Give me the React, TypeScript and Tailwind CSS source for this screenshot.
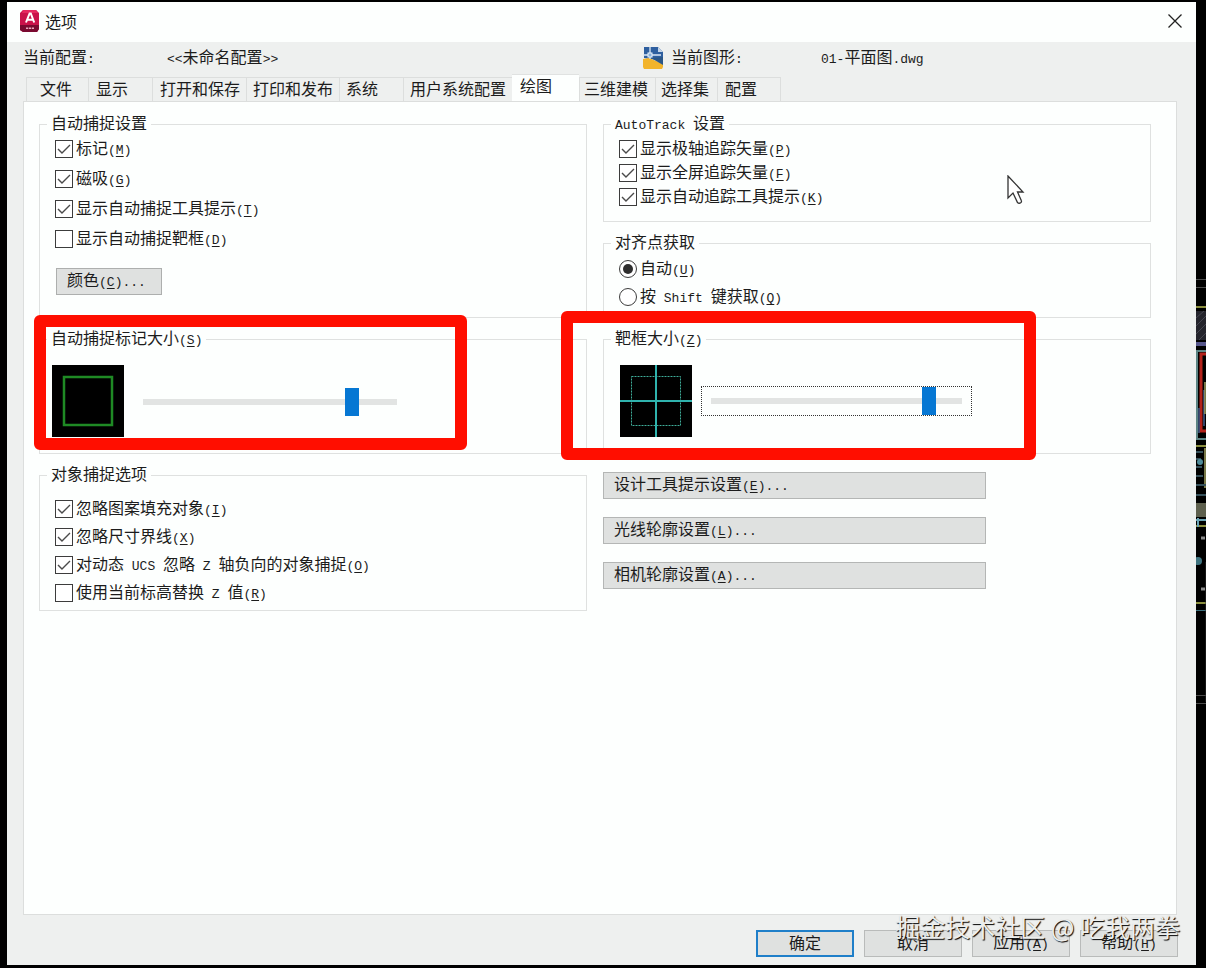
import { useState, type ReactNode } from "react"

const FONT = "font-['Noto_Sans_CJK_SC',sans-serif]"

// Latin runs are set in a half-width mono face, "_X" marks the access key
function Label({ text }: { text: string }) {
  const runs = text.match(/_[A-Z]|[\x20-\x5e\x60-\x7e]+|[^\x00-\x7f]+/g) ?? []
  return (
    <span className="whitespace-pre">
      {runs.map((run, i) => {
        if (run.startsWith("_")) {
          return (
            <span key={i} className="font-['Liberation_Mono',monospace] text-[13px] underline underline-offset-2">
              {run.slice(1)}
            </span>
          )
        }
        if (run.charCodeAt(0) < 128) {
          return (
            <span key={i} className="font-['Liberation_Mono',monospace] text-[13px]">
              {run}
            </span>
          )
        }
        return <span key={i}>{run}</span>
      })}
    </span>
  )
}

function Group({ title, className, children }: { title: string; className: string; children: ReactNode }) {
  return (
    <fieldset className="min-w-0 border border-[#dfe1e0]">
      <legend className="ml-[7px] h-5 px-1 leading-4">
        <Label text={title} />
      </legend>
      <div className={className}>{children}</div>
    </fieldset>
  )
}

function Check({ text, on = false }: { text: string; on?: boolean }) {
  const [checked, setChecked] = useState(on)
  return (
    <label className="flex h-5 w-fit items-center gap-[3px] leading-5">
      <span className="grid size-[18px] shrink-0">
        <input
          type="checkbox"
          checked={checked}
          onChange={(e) => setChecked(e.target.checked)}
          className="col-start-1 row-start-1 size-[18px] appearance-none border border-[#3c3c3c] bg-white"
        />
        {checked && (
          <svg viewBox="0 0 18 18" className="pointer-events-none col-start-1 row-start-1 size-[18px]">
            <path d="M3 9l4 4 8-8" fill="none" stroke="#4a4a4a" strokeWidth="1.4" />
          </svg>
        )}
      </span>
      <Label text={text} />
    </label>
  )
}

function Radio({ text, on = false }: { text: string; on?: boolean }) {
  return (
    <label className="flex h-5 w-fit items-center gap-[3px] leading-5">
      <span className="grid size-[18px] shrink-0 place-items-center">
        <input
          type="radio"
          name="acquire"
          defaultChecked={on}
          className="peer col-start-1 row-start-1 size-[18px] appearance-none rounded-full border border-[#3c3c3c] bg-white"
        />
        <span className="pointer-events-none col-start-1 row-start-1 hidden size-[10px] rounded-full bg-[#2e2e2e] peer-checked:block" />
      </span>
      <Label text={text} />
    </label>
  )
}

function Slider({ label, value }: { label: string; value: number }) {
  return (
    <input
      type="range"
      aria-label={label}
      defaultValue={value}
      className="block h-7 w-full appearance-none bg-transparent outline-none [&::-webkit-slider-runnable-track]:h-[6px] [&::-webkit-slider-runnable-track]:bg-[#e2e4e3] [&::-webkit-slider-thumb]:mt-[-11px] [&::-webkit-slider-thumb]:h-7 [&::-webkit-slider-thumb]:w-[14px] [&::-webkit-slider-thumb]:appearance-none [&::-webkit-slider-thumb]:bg-[#0677d3]"
    />
  )
}

function Button({ text, className }: { text: string; className: string }) {
  return (
    <button className={`h-[27px] bg-[#dfe1e0] pb-1 leading-5 ${className}`}>
      <Label text={text} />
    </button>
  )
}

const tabs = [
  { name: "文件", size: "w-[62px] pl-[13px]" },
  { name: "显示", size: "w-16 pl-[7px]" },
  { name: "打开和保存", size: "w-[94px] pl-[7px]" },
  { name: "打印和发布", size: "w-[93px] pl-[6px]" },
  { name: "系统", size: "w-16 pl-[6px]" },
  { name: "用户系统配置", size: "w-[109px] pl-[6px]" },
  { name: "绘图", size: "w-[67px] pl-2" },
  { name: "三维建模", size: "w-[76px] pl-1" },
  { name: "选择集", size: "w-[62px] pl-[5px]" },
  { name: "配置", size: "w-[64px] pl-[7px]" },
]

function Tabs() {
  return (
    <div role="tablist" className="ml-[19px] flex items-end">
      {tabs.map((tab, i) => {
        const active = tab.name === "绘图"
        return (
          <button
            key={tab.name}
            role="tab"
            aria-selected={active}
            className={`shrink-0 text-left leading-5 ${tab.size} ${
              active
                ? "-mb-px h-7 border-t border-[#e0e2e1] bg-[#fdfffe] pb-2"
                : "h-6 border-t border-l border-[#dcdedd] pb-[3px]"
            } ${i === tabs.length - 1 ? "border-r" : ""}`}
          >
            {tab.name}
          </button>
        )
      })}
    </div>
  )
}

function AppIcon() {
  return (
    <svg viewBox="0 0 19 22" className="h-[22px] w-[19px]">
      <path d="M3 0h13l3 3v16l-2 3H3l-3-2V3z" fill="#c9124a" />
      <path d="M3 0h13l2 3H2z" fill="#e5275f" />
      <path d="M0 15h19v4l-2 3H3l-3-2z" fill="#790a30" />
      <path d="M6 12.5l3.6-9h1.2l3.4 9M7.5 9.7h5.3" fill="none" stroke="#fff" strokeWidth="2" />
      <path d="M6 18.2h8" stroke="#e9a9bd" strokeWidth="1.6" strokeDasharray="2.2 .7" />
    </svg>
  )
}

function DrawingIcon() {
  return (
    <svg viewBox="0 0 20 22" className="h-[22px] w-5">
      <path d="M1 0h14l5 5v9L1 11z" fill="#2e5f9f" />
      <path d="M15 0l5 5h-5z" fill="#c4d5e8" />
      <path d="M0 12l6-1 14 6v3l-1 2H1l-1-2z" fill="#f2b42c" />
      <path d="M8 11l12-1v8z" fill="#2a5687" />
      <path d="M0 8h18M7 0v12" stroke="#dbe8f5" strokeWidth="1.3" />
      <rect x="5" y="6" width="4" height="4" fill="#86aed9" stroke="#e8f1fa" />
    </svg>
  )
}

// Sliver of the drawing that stays visible beside the dialog
function CanvasEdge() {
  return (
    <svg viewBox="0 2 10 963" preserveAspectRatio="xMinYMin slice" className="w-[10px] shrink-0 self-stretch">
      <path d="M0 279.500h10M0 287.500h10M0 695.500h10M0 703.500h10" stroke="#4b4b4b" />
      <path d="M0 307h10M0 446h10M0 526h10M0 603h10" stroke="#8b8f3f" strokeWidth="2" />
      <rect y="311" width="10" height="29" fill="#24242c" />
      <path d="M0 318l8-7M0 326l10-10M0 334l10-10M3 340l7-7" stroke="#55555f" strokeWidth=".7" />
      <path d="M0 344h10" stroke="#56568a" strokeWidth="4" />
      <path d="M0 351h10M1 351v88M0 439h10" stroke="#5c8484" strokeWidth="2" fill="none" />
      <path d="M10 354H5v77h5" stroke="#b3221b" strokeWidth="3" fill="none" />
      <path d="M3 408v25M8 390v36" stroke="#405a8a" strokeWidth="1.5" />
      <path d="M9 382v32M9 448v40" stroke="#a0a060" strokeWidth="1.5" />
      <path d="M0 452h7M0 459h5M0 467h6M0 476h7M0 485h10M0 495h10" stroke="#35505a" strokeWidth="2" />
      <circle cx="4" cy="462" r="3" fill="#4f8a98" />
      <rect y="503" width="10" height="14" fill="#5e604e" />
      <path d="M0 520h10M2 518v9" stroke="#6aa3b4" strokeWidth="2" />
      <path d="M5 538h4M5 589h4" stroke="#8a8a8a" strokeWidth="3" />
      <circle cx="2" cy="561" r="4" fill="#3f7480" />
      <path d="M0 610.500h10" stroke="#3b6f7c" />
      <path d="M10 562v140" stroke="#2e2e2e" />
    </svg>
  )
}

export default function App() {
  return (
    <div className={`flex min-h-screen bg-black pt-[2px] pb-[3px] pl-[7px] text-[16px] leading-5 text-[#1c1c1c] ${FONT}`}>
      <main className="relative flex min-w-0 flex-1 flex-col bg-[#eef0ef]">
        <header className="flex h-10 items-center bg-[#fdfffe] pr-[14px] pb-[3px] pl-[13px]">
          <AppIcon />
          <h1 className="ml-[6px] flex-1">选项</h1>
          <button aria-label="关闭">
            <svg viewBox="0 0 14 14" className="size-[14px]">
              <path d="M.5.5l13 13M13.500.5l-13 13" stroke="#222" strokeWidth="1.3" />
            </svg>
          </button>
        </header>

        <div className="flex h-8 items-center pl-4">
          <span className="w-36">
            <Label text="当前配置:" />
          </span>
          <span className="w-[476px]">
            <Label text="<<未命名配置>>" />
          </span>
          <DrawingIcon />
          <span className="ml-2 w-[150px]">
            <Label text="当前图形:" />
          </span>
          <Label text="01-平面图.dwg" />
        </div>

        <Tabs />

        <section className="mr-[19px] ml-4 grid flex-1 grid-cols-2 content-start gap-4 border border-[#dcdedd] bg-[#fdfffe] pt-3 pr-[25px] pl-[15px]">
          <div className="flex flex-col gap-[11px]">
            <Group title="自动捕捉设置" className="pb-[22px]">
              <div className="flex flex-col gap-[10px] pt-[5px] pl-[15px]">
                <Check text="标记(_M)" on />
                <Check text="磁吸(_G)" on />
                <Check text="显示自动捕捉工具提示(_T)" on />
                <Check text="显示自动捕捉靶框(_D)" />
              </div>
              <Button text="颜色(_C)..." className="mt-[19px] ml-4 w-[106px] border border-[#adafae] pl-[10px] text-left" />
            </Group>

            <div className="relative">
              <Group title="自动捕捉标记大小(_S)" className="py-4 pr-4 pl-3">
                <div className="flex items-center gap-[19px]">
                  <svg viewBox="0 0 72 72" className="size-[72px] shrink-0">
                    <rect width="72" height="72" fill="#000" />
                    <rect x="12" y="12" width="48" height="48" fill="none" stroke="#1f8a24" strokeWidth="2.500" />
                  </svg>
                  <div className="w-[254px] pt-[2px]">
                    <Slider label="自动捕捉标记大小" value={84} />
                  </div>
                </div>
              </Group>
              <div className="pointer-events-none absolute -top-[14px] -left-[5px] z-10 h-[135px] w-[433px] rounded-md border-12 border-[#ff0e00]" />
            </div>

            <Group title="对象捕捉选项" className="pb-[7px]">
              <div className="flex flex-col gap-2 pt-[14px] pl-[15px]">
                <Check text="忽略图案填充对象(_I)" on />
                <Check text="忽略尺寸界线(_X)" on />
                <Check text="对动态 UCS 忽略 Z 轴负向的对象捕捉(_O)" on />
                <Check text="使用当前标高替换 Z 值(_R)" />
              </div>
            </Group>
          </div>

          <div className="flex flex-col gap-[11px]">
            <div className="relative">
              <Group title="AutoTrack 设置" className="pb-[14px]">
                <div className="flex flex-col gap-1 pt-[5px] pl-[15px]">
                  <Check text="显示极轴追踪矢量(_P)" on />
                  <Check text="显示全屏追踪矢量(_F)" on />
                  <Check text="显示自动追踪工具提示(_K)" on />
                </div>
              </Group>
              <svg viewBox="0 0 18 30" className="pointer-events-none absolute top-[61px] left-[404px] h-[30px] w-[18px]">
                <path
                  d="M1 1v22l5-5 4.500 9.500q1.500 1.500 3.500 0 .8-1 .3-2L10.500 17H16z"
                  fill="#fff"
                  stroke="#333"
                  strokeWidth="1.3"
                />
              </svg>
            </div>

            <Group title="对齐点获取" className="pb-[10px]">
              <div className="flex flex-col gap-2 pt-[6px] pl-[15px]">
                <Radio text="自动(_U)" on />
                <Radio text="按 Shift 键获取(_Q)" />
              </div>
            </Group>

            <div className="relative">
              <Group title="靶框大小(_Z)" className="py-4 pr-4 pl-4">
                <div className="flex items-center gap-[9px]">
                  <svg viewBox="0 0 72 72" className="size-[72px] shrink-0">
                    <rect width="72" height="72" fill="#000" />
                    <rect x="11.500" y="11.500" width="49" height="49" fill="none" stroke="#3fae9a" strokeDasharray="2 1" />
                    <path d="M0 36h72M36 0v72" stroke="#2fb3ae" strokeWidth="2" />
                  </svg>
                  <div className="w-[271px] border border-dotted border-[#333] px-[9px]">
                    <Slider label="靶框大小" value={89} />
                  </div>
                </div>
              </Group>
              <div className="pointer-events-none absolute -top-[18px] -left-[42px] z-10 h-[149px] w-[475px] rounded-md border-12 border-[#ff0e00]" />
            </div>

            <div className="flex flex-col gap-[18px] pt-[7px]">
              <Button text="设计工具提示设置(_E)..." className="w-[383px] border border-[#b4b6b5] pl-[10px] text-left" />
              <Button text="光线轮廓设置(_L)..." className="w-[383px] border border-[#b4b6b5] pl-[10px] text-left" />
              <Button text="相机轮廓设置(_A)..." className="w-[383px] border border-[#b4b6b5] pl-[10px] text-left" />
            </div>
          </div>
        </section>

        <footer className="flex justify-end gap-[10px] pt-[15px] pr-[18px] pb-2">
          <Button text="确定" className="w-[98px] border-2 border-[#1f7fc9]" />
          <Button text="取消" className="w-[98px] border border-[#b9bbba]" />
          <Button text="应用(_A)" className="w-[98px] border border-[#b9bbba]" />
          <Button text="帮助(_H)" className="w-[98px] border border-[#b9bbba]" />
        </footer>

        <p className="pointer-events-none absolute right-4 bottom-[23px] text-[25px] leading-8 whitespace-nowrap text-[#eceeed] [text-shadow:1px_1px_1px_#000]">
          掘金技术社区 @ 吃我两拳
        </p>
      </main>
      <CanvasEdge />
    </div>
  )
}
